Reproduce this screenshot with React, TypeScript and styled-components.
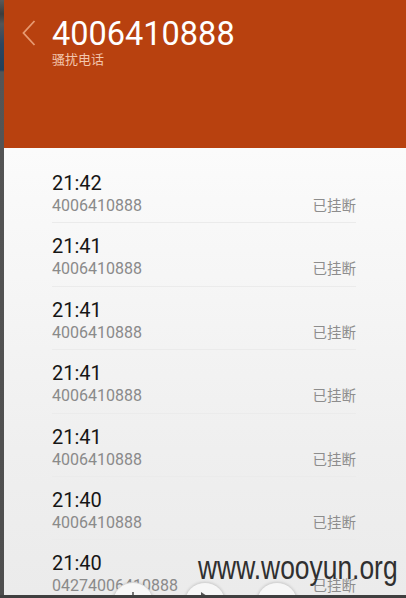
import React from "react";
import styled, { createGlobalStyle } from "styled-components";

const Global = createGlobalStyle`
  html, body { margin: 0; padding: 0; }
  body { width: 406px; height: 598px; overflow: hidden; background: #4d4d4d; font-family: Roboto, "Noto Sans CJK SC", sans-serif; }
`;

const Frame = styled.div`
  position: relative;
  width: 406px;
  height: 598px;
  display: flex;
  overflow: hidden;
`;

const LeftEdge = styled.div`
  width: 4px;
  flex: none;
  background: linear-gradient(#5a5a5a 0, #3d3d3d 14px, #555 24px, #2e4660 44px, #23405a 70px, #555 72px, #4e4e4e 100%);
`;

const Screen = styled.div`
  flex: 1;
  display: flex;
  flex-direction: column;
  height: 595px;
  overflow: hidden;
  background: linear-gradient(#ffffff 0, #fbfbfb 150px, #efefef 450px, #ebebeb 100%);
`;

const Header = styled.header`
  height: 148px;
  flex: none;
  background: #b8410f;
  display: flex;
  align-items: flex-start;
  padding: 16px 0 0 18px;
  box-sizing: border-box;
  gap: 16px;
`;

const Back = styled.svg`
  width: 14px;
  height: 26px;
  margin-top: 4px;
  flex: none;
`;

const TitleBlock = styled.div`
  display: flex;
  flex-direction: column;
`;

const Title = styled.div`
  font-size: 32.5px;
  line-height: 36px;
  color: #ffffff;
`;

const Subtitle = styled.div`
  font-size: 13px;
  line-height: 17px;
  color: #f3c6ad;
  margin-top: -1px;
`;

const List = styled.div`
  display: flex;
  flex-direction: column;
  padding: 12px 50px 0 48px;
`;

const Row = styled.div<{ last?: boolean }>`
  height: 63.4px;
  padding-top: 12px;
  box-sizing: border-box;
  border-bottom: 1px solid ${(p) => (p.last ? "transparent" : "#ebebeb")};
  display: flex;
  flex-direction: column;
  flex: none;
`;

const Time = styled.div`
  font-size: 20px;
  line-height: 23px;
  color: #161616;
`;

const Line2 = styled.div`
  display: flex;
  justify-content: space-between;
  align-items: baseline;
`;

const Number = styled.div`
  font-size: 16px;
  line-height: 20px;
  color: #8a8a8a;
`;

const Status = styled.div`
  font-size: 14.5px;
  line-height: 20px;
  color: #8d8d8d;
  font-family: "Noto Sans CJK SC", sans-serif;
`;

const Watermark = styled.div`
  position: absolute;
  left: 198px;
  top: 548px;
  font-family: "Liberation Sans", Arial, sans-serif;
  font-size: 33px;
  line-height: 40px;
  color: #303030;
  transform: scaleX(0.8);
  transform-origin: left top;
  white-space: nowrap;
`;

const Fabs = styled.div`
  position: absolute;
  left: 112px;
  top: 582px;
  display: flex;
  gap: 30px;
`;

const Fab = styled.div`
  width: 42px;
  height: 42px;
  border-radius: 50%;
  background: #f7f7f7;
  border: 1px solid #d6d6d6;
  box-shadow: 0 0 3px rgba(0, 0, 0, 0.15);
  display: flex;
  justify-content: center;
  padding-top: 8px;
  box-sizing: border-box;
`;

const BottomBar = styled.div`
  position: absolute;
  left: 0;
  bottom: 0;
  width: 406px;
  height: 3px;
  background: #3f3f3f;
`;

const calls = [
  { time: "21:42", num: "4006410888" },
  { time: "21:41", num: "4006410888" },
  { time: "21:41", num: "4006410888" },
  { time: "21:41", num: "4006410888" },
  { time: "21:41", num: "4006410888" },
  { time: "21:40", num: "4006410888" },
  { time: "21:40", num: "04274006410888" },
];

export default function App() {
  return (
    <>
      <Global />
      <Frame>
        <LeftEdge />
        <Screen>
          <Header>
            <Back viewBox="0 0 14 26">
              <polyline points="12.5,1 1.5,13 12.5,25" fill="none" stroke="#e79a72" strokeWidth="1.8" />
            </Back>
            <TitleBlock>
              <Title>4006410888</Title>
              <Subtitle>骚扰电话</Subtitle>
            </TitleBlock>
          </Header>
          <List>
            {calls.map((c, i) => (
              <Row key={i} last={i === calls.length - 1}>
                <Time>{c.time}</Time>
                <Line2>
                  <Number>{c.num}</Number>
                  <Status>已挂断</Status>
                </Line2>
              </Row>
            ))}
          </List>
        </Screen>
        <Watermark>www.wooyun.org</Watermark>
        <Fabs>
          <Fab>
            <svg width="14" height="14" viewBox="0 0 14 14">
              <path d="M7 1v12M1 7h12" stroke="#555" strokeWidth="1.6" fill="none" />
            </svg>
          </Fab>
          <Fab>
            <svg width="14" height="14" viewBox="0 0 14 14">
              <path d="M3 1l9 6-9 6z" fill="#555" />
            </svg>
          </Fab>
          <Fab />
        </Fabs>
        <BottomBar />
      </Frame>
    </>
  );
}
